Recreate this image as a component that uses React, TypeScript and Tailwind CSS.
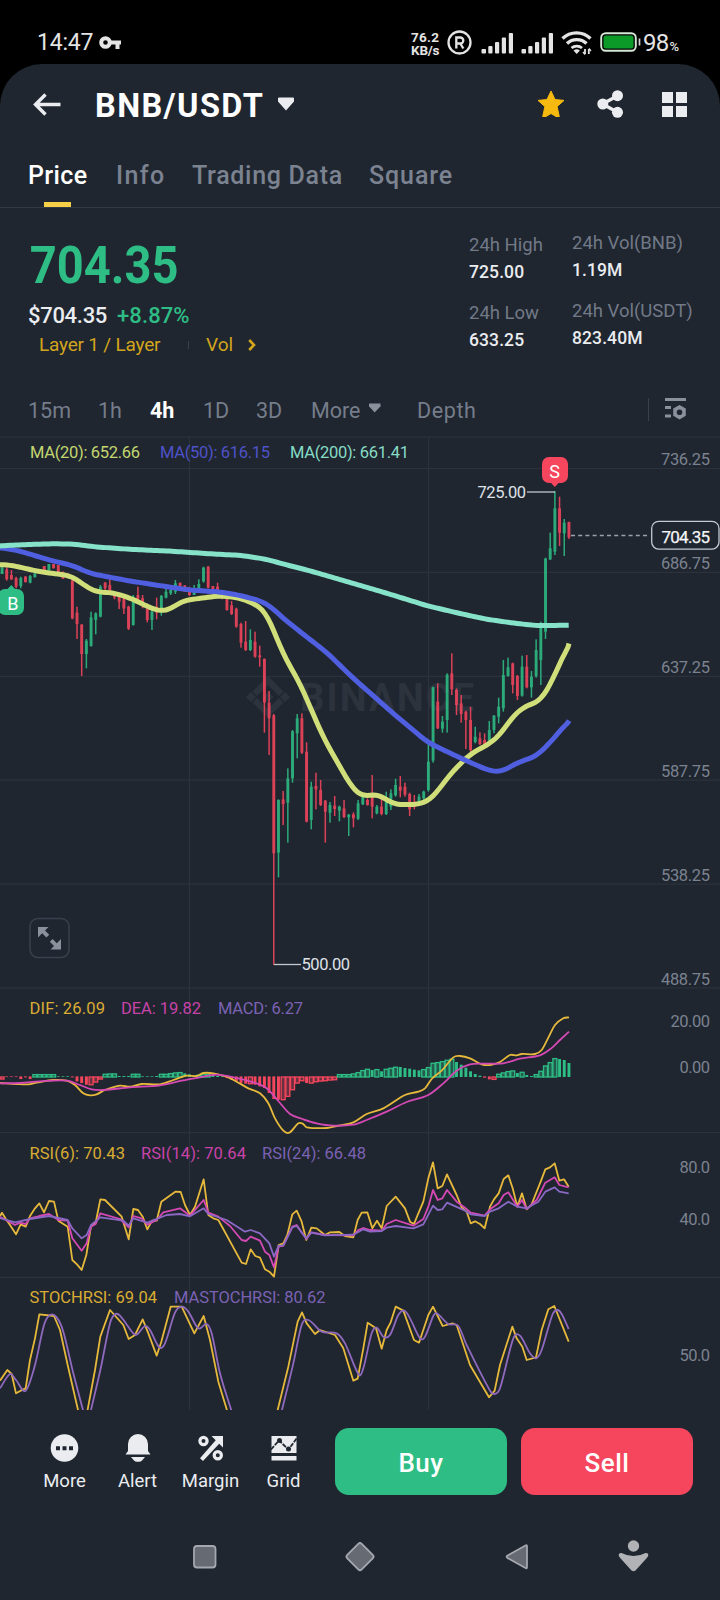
import React from "react";

const UP = "#2ebd85";
const DOWN = "#f6465d";
const STEP = 4.685;
const X0 = 2.05;
const SCALE = 3;

type Pt = [number, number];

/* Candle extents: [direction, high, low, body top?, body bottom?] in thirds of a pixel below `base`. */
type Candle = [0 | 1, number, number, number?, number?];

const candlesA: Candle[] = [
  [1, 322, 342], [0, 322, 362, 328, 358], [0, 330, 360, 345, 358], [0, 350, 385, 354, 380], [1, 350, 385, 354, 378],
  [0, 348, 368, 350, 366], [1, 345, 370, 348, 368], [1, 340, 352], [0, 330, 340], [0, 318, 335], [1, 312, 332],
  [0, 312, 325], [0, 315, 340], [0, 335, 356], [0, 340, 352], [0, 355, 478, 362, 475], [0, 440, 537, 458, 492],
  [0, 492, 648, 494, 582], [1, 537, 625, 542, 582], [1, 455, 560, 472, 558], [1, 457, 523, 460, 480],
  [1, 375, 472, 380, 470], [0, 366, 395, 368, 385], [0, 358, 395, 375, 395], [0, 395, 418, 400, 412],
  [0, 400, 447, 408, 425], [0, 405, 462, 415, 445], [0, 437, 510, 440, 506], [1, 405, 497, 410, 495],
  [0, 380, 420, 405, 418], [0, 405, 445, 415, 435], [0, 430, 487, 445, 480], [1, 440, 510, 455, 480],
  [0, 413, 478, 440, 458], [1, 405, 467, 408, 455], [1, 382, 415, 395, 413], [1, 380, 405, 390, 400],
  [1, 360, 402, 370, 395], [0, 368, 385], [0, 376, 395], [0, 380, 408, 385, 405], [1, 375, 405, 385, 405],
  [1, 358, 395, 372, 392], [1, 320, 368, 323, 364], [0, 318, 385, 320, 383], [0, 378, 400], [0, 368, 392, 380, 392],
  [0, 395, 418, 400, 415], [0, 412, 452, 418, 450], [0, 423, 465, 436, 462], [0, 443, 503, 446, 500],
];
const candlesB: Candle[] = [
  [0, 248, 323, 252, 308], [0, 243, 333, 305, 330], [1, 268, 333, 300, 330], [0, 275, 353, 305, 350],
  [0, 317, 380, 346, 352], [0, 355, 578, 357, 488], [0, 453, 645, 488, 535], [0, 522, 1275, 526, 940],
  [1, 778, 1012, 780, 938], [0, 753, 855, 778, 792], [1, 685, 908, 715, 788], [1, 570, 728, 574, 715],
  [1, 522, 655, 535, 580], [0, 520, 642, 535, 638], [0, 607, 847, 635, 845], [1, 725, 868, 740, 840],
  [0, 698, 808, 738, 748], [0, 720, 798, 750, 795], [0, 780, 908, 782, 815], [1, 786, 848, 795, 818],
  [0, 768, 828, 797, 807], [1, 797, 844, 800, 812], [0, 780, 834, 805, 831], [1, 822, 888, 824, 832],
  [0, 817, 862, 823, 835], [1, 780, 840, 790, 836], [1, 760, 795, 768, 793], [0, 775, 797, 780, 795],
  [0, 705, 835, 760, 800], [1, 795, 823, 800, 820], [0, 765, 826, 800, 822], [1, 755, 825, 775, 822],
  [1, 748, 810, 760, 800], [1, 716, 770, 735, 766], [0, 708, 772, 740, 752], [0, 728, 770, 740, 764],
  [0, 758, 828, 762, 808], [0, 765, 808, 785, 800], [1, 762, 785, 770, 783], [1, 752, 782, 755, 775],
];
const candlesC: Candle[] = [
  [1, 900, 1055, 965, 1050], [1, 740, 968, 742, 962], [0, 730, 867, 785, 865], [1, 828, 878, 845, 866],
  [1, 700, 878, 704, 840], [0, 640, 765, 700, 748], [0, 745, 825, 750, 795], [0, 765, 848, 790, 822],
  [0, 812, 927, 815, 840], [0, 800, 935, 840, 930], [1, 860, 910, 890, 906], [0, 877, 915, 895, 912],
  [0, 880, 915, 900, 915], [1, 843, 915, 870, 905], [1, 825, 880, 827, 870], [1, 773, 850, 800, 830],
  [1, 660, 815, 705, 805], [1, 653, 710, 682, 708], [0, 668, 760, 670, 735], [0, 705, 780, 708, 768],
  [1, 647, 770, 680, 767], [0, 645, 745, 680, 742], [1, 693, 773, 710, 742], [1, 598, 713, 630, 708],
  [1, 545, 735, 560, 660], [1, 353, 597, 356, 575], [1, 278, 360, 325, 358], [1, 153, 345, 205, 335],
  [0, 170, 318, 205, 278], [1, 237, 348, 248, 280], [0, 245, 297, 246, 292],
];

const unpack = (list: Candle[], base: number, first: number) =>
  list.map(([up, h, l, t, b], i) => ({
    x: X0 + STEP * (first + i),
    color: up ? UP : DOWN,
    high: base + h / SCALE,
    low: base + l / SCALE,
    top: base + (t ?? h) / SCALE,
    bottom: base + (b ?? l) / SCALE,
  }));
const candles = [...unpack(candlesA, 460, 0), ...unpack(candlesB, 540, 51), ...unpack(candlesC, 440, 91)];

const macdBars = [
  -8, -2, -2, -2, -8, -3, -8, 9, 9, 9, 9, 9, 2, 2, 2, -3, -15, -20, -25, -25, -17, -8, 10, 11, 11, 3, 3, 3, 10, 10, 2,
  2, 2, 3, 10, 10, 12, 14, 15, 11, 8, 5, 7, 10, 10, 7, 3, 2, -5, -10, -15, -20, -22, -22, -25, -30, -35, -50, -68, -70,
  -70, -60, -40, -20, -13, -20, -20, -16, -14, -13, -11, -10, 9, 9, 9, 11, 15, 21, 25, 21, 24, 17, 25, 28, 31, 30, 27,
  25, 22, 20, 24, 30, 43, 45, 48, 52, 55, 45, 37, 28, 17, 9, 4, -4, -9, -9, 10, 14, 18, 20, 12, 16, 6, 3, 9, 19, 35, 45,
  57, 54, 51, 42,
];

const at = (ox: number, oy: number, pts: Pt[]): Pt[] => pts.map(([x, y]) => [ox + x / SCALE, oy + y / SCALE]);

const f = (n: number) => n.toFixed(2);
const line = (pts: Pt[]) => "M" + pts.map(([x, y]) => `${f(x)} ${f(y)}`).join("L");
const curve = (p: Pt[]) => {
  let d = `M${f(p[0][0])} ${f(p[0][1])}`;
  for (let i = 0; i < p.length - 1; i++) {
    const a = p[i - 1] ?? p[i];
    const b = p[i];
    const c = p[i + 1];
    const e = p[i + 2] ?? c;
    const s = (c[0] - b[0]) / 3;
    const m1 = c[0] === a[0] ? 0 : (c[1] - a[1]) / (c[0] - a[0]);
    const m2 = e[0] === b[0] ? 0 : (e[1] - b[1]) / (e[0] - b[0]);
    d += `C${f(b[0] + s)} ${f(b[1] + m1 * s)} ${f(c[0] - s)} ${f(c[1] - m2 * s)} ${f(c[0])} ${f(c[1])}`;
  }
  return d;
};

/* Resamples at every third pixel and averages neighbours. */
const smooth = (p: Pt[]): Pt[] => {
  const s: Pt[] = [];
  const end = p[p.length - 1][0];
  let j = 0;
  for (let x = p[0][0]; x < end; x += 3) {
    while (p[j + 1][0] < x) j++;
    const t = (x - p[j][0]) / (p[j + 1][0] - p[j][0]);
    s.push([x, p[j][1] + t * (p[j + 1][1] - p[j][1])]);
  }
  s.push(p[p.length - 1]);
  return s.map(([x], i) => {
    const r = Math.min(2, i, s.length - 1 - i);
    const w = s.slice(i - r, i + r + 1);
    return [x, w.reduce((n, q) => n + q[1], 0) / w.length];
  });
};

const ma200: Pt[] = [
  [-2, 546], [20, 544.8], [50, 543.8], [72, 544], [97, 547], [130, 549.3], [173, 551.3], [213, 554], [240, 555.3],
  [265, 559], [287, 565], [307, 570], [345, 581], [387, 593.3], [427, 605.7], [460, 613.5], [487, 619.3], [513, 623],
  [537, 625.7], [568.7, 625.2],
];
const ma50: Pt[] = [
  [-2, 547.5], [17, 550.3], [53, 561], [72, 565.3], [90, 573.3], [107, 576.7], [130, 581], [167, 586.7], [190, 590],
  [220, 592], [240, 595.3], [263, 601.7], [272, 607.7], [283, 618], [300, 631.7], [327, 652.7], [353, 678],
  [397, 716.7], [427, 741.7], [447, 751.7], [467, 761], [490, 771], [502, 771.5], [517, 763], [537, 755.7],
  [550, 742.7], [569, 720.5],
];
const ma20: Pt[] = [
  [-2, 564.7], [10, 565], [40, 571.7], [70, 575.7], [80, 581.7], [88, 588], [97, 592], [113, 592.7], [130, 598],
  [153, 609], [163, 611.5], [172, 608], [183, 600.7], [200, 598.3], [220, 595.8], [240, 598], [257, 605],
  [265, 612], [270, 621], [280, 646.7], [290, 666.7], [300, 683.3], [310, 706.7], [323, 736.7], [337, 761.7],
  [352, 787.5], [362, 796.5], [377, 794], [395, 804.6], [415, 804.6], [428, 801.5], [440, 788.3], [450, 774.3],
  [470, 754.3], [490, 743.3], [500, 735], [510, 720], [522, 707.7], [530, 705], [542, 699], [550, 685], [569, 643.5],
];

const dif = at(0, 980, [
  [0, 309], [50, 312], [85, 313], [110, 308], [160, 300], [200, 302], [225, 315], [250, 340], [270, 346], [290, 343],
  [315, 330], [360, 317], [390, 320], [425, 312], [480, 313], [520, 300], [560, 287], [590, 288], [610, 279],
  [640, 280], [680, 290], [710, 305], [745, 325], [780, 340], [805, 370], [825, 415], [850, 452], [868, 458],
  [895, 430], [908, 431], [920, 442], [980, 444], [1010, 438], [1060, 427], [1100, 402], [1150, 385], [1215, 345],
  [1255, 335], [1275, 325], [1295, 297], [1325, 272], [1360, 232], [1380, 228], [1410, 235], [1445, 253], [1470, 255],
  [1500, 246], [1530, 225], [1550, 226], [1565, 222], [1605, 222], [1625, 210], [1645, 173], [1665, 135], [1690, 115],
  [1707, 112],
]);
const dea = at(0, 980, [
  [0, 310], [60, 309], [120, 304], [200, 302], [240, 315], [275, 328], [310, 330], [390, 322], [480, 316], [545, 302],
  [600, 292], [650, 284], [690, 290], [760, 307], [800, 325], [835, 363], [870, 402], [910, 418], [950, 430],
  [1000, 437], [1060, 434], [1100, 420], [1160, 395], [1220, 366], [1285, 345], [1330, 310], [1370, 272], [1410, 253],
  [1460, 251], [1510, 250], [1560, 236], [1620, 226], [1650, 208], [1680, 180], [1707, 155],
]);
const rsi6 = at(0, 980, [
  [0, 708], [6, 698], [18, 718], [30, 735], [48, 763], [62, 733], [77, 740], [90, 708], [105, 685], [118, 670],
  [132, 697], [147, 663], [162, 665], [175, 722], [203, 740], [217, 840], [231, 853], [245, 870], [259, 825],
  [273, 738], [287, 728], [301, 658], [315, 660], [365, 710], [386, 778], [400, 687], [414, 690], [428, 710],
  [442, 748], [456, 722], [470, 722], [484, 665], [526, 635], [542, 636], [555, 675], [570, 705], [585, 680],
  [611, 598], [625, 705], [640, 715], [655, 720], [725, 848], [738, 852], [752, 808], [766, 828], [780, 833],
  [795, 868], [808, 875], [822, 890], [836, 795], [850, 790], [862, 765], [877, 703], [890, 692], [905, 725],
  [919, 780], [934, 743], [950, 745], [975, 765], [990, 757], [1018, 756], [1035, 768], [1060, 772], [1073, 720],
  [1085, 698], [1102, 697], [1117, 745], [1131, 722], [1145, 745], [1160, 678], [1187, 650], [1215, 685], [1230, 725],
  [1242, 732], [1255, 700], [1270, 665], [1285, 595], [1299, 547], [1313, 625], [1327, 618], [1341, 583], [1370, 645],
  [1385, 682], [1400, 695], [1412, 730], [1425, 724], [1440, 732], [1454, 745], [1470, 680], [1482, 658], [1496, 640],
  [1511, 597], [1525, 586], [1538, 625], [1552, 680], [1566, 640], [1580, 688], [1594, 675], [1622, 605], [1636, 568],
  [1650, 562], [1664, 550], [1678, 602], [1692, 598], [1706, 620],
]);
const rsi14 = at(0, 980, [
  [0, 710], [45, 735], [60, 728], [77, 732], [90, 715], [118, 708], [147, 702], [175, 720], [203, 722], [217, 775],
  [245, 812], [260, 790], [273, 740], [287, 732], [301, 700], [360, 717], [386, 742], [400, 708], [425, 715],
  [442, 734], [470, 720], [490, 697], [540, 685], [570, 707], [611, 660], [625, 698], [655, 710], [690, 738],
  [725, 780], [738, 783], [752, 770], [780, 782], [795, 815], [808, 825], [822, 862], [836, 800], [850, 797],
  [877, 740], [890, 735], [919, 777], [934, 757], [975, 765], [1060, 766], [1075, 750], [1090, 744], [1110, 750],
  [1145, 752], [1160, 732], [1187, 720], [1240, 737], [1270, 717], [1285, 680], [1299, 630], [1313, 660], [1327, 655],
  [1341, 630], [1370, 665], [1395, 683], [1412, 698], [1454, 707], [1470, 688], [1496, 670], [1511, 645], [1525, 637],
  [1552, 680], [1566, 660], [1580, 687], [1610, 660], [1636, 608], [1664, 592], [1678, 615], [1706, 622],
]);
const rsi24 = at(0, 980, [
  [0, 714], [45, 727], [90, 717], [147, 708], [203, 720], [217, 745], [245, 775], [260, 765], [273, 735], [301, 712],
  [370, 722], [386, 737], [400, 715], [442, 728], [500, 705], [540, 702], [570, 709], [611, 685], [625, 702],
  [680, 720], [735, 755], [752, 750], [780, 760], [808, 790], [822, 830], [836, 797], [850, 797], [877, 742],
  [890, 738], [919, 775], [934, 758], [975, 766], [1060, 764], [1090, 748], [1110, 755], [1145, 753], [1160, 743],
  [1187, 738], [1240, 745], [1270, 733], [1299, 677], [1313, 690], [1327, 688], [1341, 668], [1395, 692], [1412, 703],
  [1454, 708], [1470, 695], [1496, 685], [1525, 665], [1552, 680], [1580, 685], [1615, 665], [1636, 635], [1664, 622],
  [1678, 635], [1706, 640],
]);
const stoch = [
  at(0, 1270, [
    [0, 332], [22, 300], [35, 312], [48, 370], [62, 362], [77, 355], [90, 270], [105, 205], [118, 133], [162, 138],
    [180, 180], [203, 285], [235, 424],
  ]),
  at(0, 1270, [
    [262, 424], [285, 300], [301, 200], [330, 120], [370, 165], [386, 207], [405, 195], [428, 148], [445, 190],
    [470, 257], [484, 215], [512, 110], [545, 110], [583, 190], [611, 138], [630, 210], [655, 335], [682, 424],
  ]),
  at(0, 1270, [
    [832, 424], [865, 290], [893, 155], [906, 127], [920, 160], [945, 192], [960, 180], [1005, 195], [1030, 235],
    [1060, 332], [1073, 326], [1090, 235], [1103, 158], [1128, 175], [1145, 236], [1160, 180], [1172, 157],
    [1187, 110], [1210, 122], [1242, 210], [1257, 218], [1285, 135], [1299, 110], [1328, 168], [1357, 160],
    [1370, 165], [1410, 285], [1467, 382], [1484, 362], [1500, 285], [1537, 170], [1550, 205], [1567, 230],
    [1580, 270], [1608, 262], [1625, 180], [1645, 118], [1663, 108], [1706, 215],
  ]),
];
const stochMa = [
  at(0, 1270, [
    [0, 355], [30, 312], [48, 330], [77, 362], [105, 285], [132, 165], [150, 135], [170, 142], [190, 185], [220, 310],
    [250, 424],
  ]),
  at(0, 1270, [
    [272, 424], [301, 300], [330, 160], [345, 133], [360, 137], [400, 190], [412, 193], [435, 168], [450, 180],
    [478, 232], [495, 220], [525, 128], [545, 110], [565, 125], [595, 175], [620, 162], [635, 190], [660, 310],
    [695, 424],
  ]),
  at(0, 1270, [
    [845, 424], [880, 280], [905, 165], [925, 150], [965, 185], [1010, 190], [1035, 220], [1077, 315], [1090, 295],
    [1115, 190], [1130, 173], [1150, 200], [1170, 195], [1195, 135], [1213, 122], [1230, 145], [1260, 205],
    [1275, 200], [1300, 138], [1310, 130], [1345, 162], [1375, 168], [1400, 225], [1470, 362], [1484, 372],
    [1500, 355], [1540, 205], [1560, 197], [1590, 250], [1608, 265], [1625, 240], [1657, 135], [1672, 120],
    [1685, 132], [1706, 177],
  ]),
];

const gridRows = [437, 468.5, 572.3, 676.3, 780.2, 884.2, 987.8, 1132.7, 1277.4];

/* [text, left, width, baseline, colour] */
const legends: [string, number, number, number, string][] = [
  ["MA(20): 652.66", 30, 110, 458, "#c3d66f"],
  ["MA(50): 616.15", 160, 110, 458, "#4f52c8"],
  ["MA(200): 661.41", 290, 119, 458, "#86dcc5"],
  ["DIF: 26.09", 29.5, 75.5, 1014, "#d9ac33"],
  ["DEA: 19.82", 121, 80, 1014, "#c843a8"],
  ["MACD: 6.27", 218, 85, 1014, "#7b62b3"],
  ["RSI(6): 70.43", 29.5, 95.5, 1159, "#d9ac33"],
  ["RSI(14): 70.64", 141, 105, 1159, "#c843a8"],
  ["RSI(24): 66.48", 262, 104, 1159, "#7b62b3"],
  ["STOCHRSI: 69.04", 29.5, 127.5, 1303.2, "#d9ac33"],
  ["MASTOCHRSI: 80.62", 174, 151.5, 1303.2, "#7b62b3"],
];
const axis: [string, number, number][] = [
  ["736.25", 49, 465], ["686.75", 49, 569], ["637.25", 49, 672.8], ["587.75", 49, 776.8], ["538.25", 49, 880.8],
  ["488.75", 49, 984.8], ["20.00", 39.5, 1027], ["0.00", 30.5, 1073], ["80.0", 30.5, 1173], ["40.0", 30.5, 1225],
  ["50.0", 30.5, 1361.3],
];

function Chart() {
  return (
    <svg className="block shrink-0 font-['Roboto',sans-serif]" width="720" height="974" viewBox="0 436 720 974">
      <g fill="#2c333d">
        <path d="M268 676l8 8-4.500 4.500-3.500-3.500-11 11-4.500-4.500zM268 676l15.500 15.500-4.500 4.500-11-11zM268 718l-15.500-15.500 4.500-4.500 11 11 11-11 4.500 4.500zM246 697l5-5 5 5-5 5zM280 697l5-5 5 5-5 5zM268 691.500l5.500 5.500-5.500 5.500-5.500-5.500z" />
        <text x="300" y="711" fontSize="38" fontWeight="700" textLength="174">BINANCE</text>
      </g>
      <g stroke="#2b323c" strokeWidth="1.200">
        {gridRows.map((y) => (
          <line key={y} x1="0" x2="720" y1={y} y2={y} />
        ))}
        <line x1="189.500" x2="189.500" y1="437" y2="1410" />
        <line x1="428.500" x2="428.500" y1="437" y2="1410" />
      </g>

      {candles.map((c, i) => (
        <g key={i} fill={c.color} opacity="0.88">
          <rect x={c.x - 0.75} y={c.high} width="1.500" height={c.low - c.high} />
          <rect x={c.x - 1.45} y={c.top} width="2.900" height={c.bottom - c.top} />
        </g>
      ))}

      <g fill="none" strokeWidth="5">
        <path d={line(smooth(ma20))} stroke="#d0df79" />
        <path d={line(smooth(ma50))} stroke="#4f5fe0" />
        <path d={line(smooth(ma200))} stroke="#87e2ca" />
      </g>

      <g fill="none" stroke="#c3c7ce" strokeWidth="1.300">
        <path d="M274 964.500H301" />
        <path d="M527 492H555" />
        <path d="M571 535.500H648" strokeDasharray="4 3.200" stroke="#9aa0aa" />
      </g>
      <rect x="651.700" y="521.300" width="67.300" height="27.800" rx="7" fill="#1f2630" stroke="#c5c9d0" strokeWidth="1.300" />
      <text x="661.500" y="543.200" fontSize="17" textLength="48.500" fill="#f4f5f7" stroke="#f4f5f7" strokeWidth="0.250">704.35</text>
      <text x="477.500" y="498" fontSize="16.500" textLength="48.500" fill="#dfe2e7">725.00</text>
      <text x="301.500" y="970" fontSize="16.500" textLength="48.500" fill="#dfe2e7">500.00</text>

      <path d="M549 457h12a7 7 0 0 1 7 7v12a7 7 0 0 1-7 7h-2.500l-3.700 4-3.700-4H549a7 7 0 0 1-7-7v-12a7 7 0 0 1 7-7z" fill={DOWN} />
      <text x="554.500" y="478" fontSize="18" textAnchor="middle" fill="#fff">S</text>
      <path d="M5 589h2.500l3.800-4 3.700 4h2a7 7 0 0 1 7 7v12a7 7 0 0 1-7 7H5a7 7 0 0 1-7-7v-12a7 7 0 0 1 7-7z" fill={UP} />
      <text x="12.800" y="609.500" fontSize="18" textAnchor="middle" fill="#fff">B</text>

      <rect x="30" y="918.500" width="39" height="39" rx="8" fill="#1f2630" stroke="#39414c" strokeWidth="1.500" />
      <g fill="#8a919d">
        <path d="M38 927h10.500l-3.500 3.500 4.200 4.200-2.800 2.800-4.200-4.200L38 937.500z" />
        <path d="M61 949.500h-10.500l3.500-3.500-4.200-4.200 2.800-2.800 4.200 4.200L61 939z" />
      </g>

      {macdBars.map((v, i) => {
        const x = X0 + STEP * i;
        const h = Math.abs(v) / SCALE;
        const color = v > 0 ? UP : DOWN;
        const y = v > 0 ? 1077.4 - h - 0.4 : 1076.4;
        const rising = i === 0 || v >= macdBars[i - 1];
        return rising && h > 1.5 ? (
          <rect key={i} x={x - 2} y={y + 0.6} width="4" height={Math.max(h - 0.6, 1)} fill={color} fillOpacity="0.350" stroke={color} strokeWidth="1.300" />
        ) : (
          <rect key={i} x={x - 1.45} y={y} width="2.900" height={h} fill={color} />
        );
      })}

      <g fill="none" strokeWidth="1.800" strokeLinejoin="round">
        <path d={curve(dif)} stroke="#e6b93c" />
        <path d={curve(dea)} stroke="#d549b4" />
        <path d={line(rsi6)} stroke="#e6b93c" />
        <path d={line(rsi14)} stroke="#d549b4" />
        <path d={line(rsi24)} stroke="#8a68c4" />
        {stoch.map((p, i) => (
          <path key={i} d={line(p)} stroke="#e6b93c" />
        ))}
        {stochMa.map((p, i) => (
          <path key={i} d={curve(p)} stroke="#8f69bd" />
        ))}
      </g>

      {legends.map(([t, x, w, y, c]) => (
        <text key={t} x={x} y={y} fontSize="16.500" textLength={w} fill={c}>{t}</text>
      ))}
      {axis.map(([t, w, y]) => (
        <text key={t} x={710 - w} y={y} fontSize="16.500" textLength={w} fill="#7b828f">{t}</text>
      ))}
    </svg>
  );
}

function Signal() {
  return (
    <svg width="33" height="22" viewBox="0 0 33 22" fill="#e4e4e4">
      <rect x="0.500" y="17" width="4.500" height="4.500" rx="1" />
      <rect x="7.300" y="14" width="4.200" height="7.500" rx="1" />
      <rect x="14" y="10" width="4.200" height="11.500" rx="1" />
      <rect x="20.800" y="5.500" width="4.200" height="16" rx="1" />
      <rect x="27.800" y="1" width="4.200" height="20.500" rx="1" />
    </svg>
  );
}

function StatusBar() {
  return (
    <div className="flex h-[64px] shrink-0 items-center bg-black pt-[21px] pl-[37px] text-[#e4e4e4]">
      <span className="w-[62px] text-[23px] leading-none tracking-[-0.200px]">14:47</span>
      <svg width="23" height="14" viewBox="0 0 23 14" fill="none" stroke="#e4e4e4">
        <circle cx="6.500" cy="6.500" r="4.300" strokeWidth="4" />
        <path d="M10 6.500h12M18.500 7v6" strokeWidth="4" />
      </svg>
      <div className="ml-[289px] flex w-[36px] flex-col pt-[2px] text-[13.500px] leading-[13px] font-bold">
        <span className="tracking-[0.300px]">76.2</span>
        <span className="tracking-[-0.200px]">KB/s</span>
      </div>
      <svg className="mr-[9px]" width="25" height="25" viewBox="0 0 25 25" fill="none" stroke="#e4e4e4">
        <circle cx="12.500" cy="12.500" r="11" strokeWidth="2.300" />
        <path d="M9.300 18.500v-11h4a2.800 2.800 0 0 1 0 6h-4m4 0l3 5" strokeWidth="2.300" />
      </svg>
      <Signal />
      <div className="w-[7px]" />
      <Signal />
      <svg className="ml-[7px]" width="32" height="24" viewBox="0 0 32 24" fill="none" stroke="#e4e4e4">
        <path d="M1.500 7.500a20 20 0 0 1 28 0M6 12.500a14 14 0 0 1 19.500 0" strokeWidth="3.300" />
        <path d="M10.500 17a8 8 0 0 1 10.500 0" strokeWidth="2.800" />
        <path d="M12.500 19.500a5 5 0 0 1 6.400 0L15.700 23z" fill="#e4e4e4" stroke="none" />
        <path d="M24 18v5M27.800 18v5" strokeWidth="1.800" />
        <path d="M22 21l2 2.500M30 20l-2-2.500" strokeWidth="1.300" />
      </svg>
      <svg className="ml-[7px]" width="41" height="21" viewBox="0 0 41 21">
        <rect x="1.200" y="1.200" width="34.600" height="17.600" rx="4.500" fill="none" stroke="#d5e6d5" strokeWidth="1.900" />
        <rect x="3.500" y="3.500" width="30" height="13" rx="2.500" fill="#0b9a28" />
        <path d="M39.500 6.500v7" stroke="#d0d0d0" strokeWidth="1.700" />
      </svg>
      <span className="ml-[2px] text-[24px] leading-none tracking-[-0.800px]">98</span>
      <span className="mt-[7px] ml-px text-[13px] leading-none font-medium">%</span>
    </div>
  );
}

function Header() {
  return (
    <div className="flex h-[80px] shrink-0 items-center pl-[32px]">
      <svg className="w-[62px]" width="62" height="24" viewBox="0 0 62 24" fill="none" stroke="#eaecef" strokeWidth="3.400">
        <path d="M28.500 12.500H3.500M13.500 2.500L3.500 12.500l10 10" />
      </svg>
      <span className="w-[183px] pt-[5px] pl-px text-[32.500px] leading-none font-bold tracking-[1.400px] text-white">BNB/USDT</span>
      <svg width="18" height="14" viewBox="0 0 18 14" fill="#eaecef">
        <path d="M2 0.500h14a1 1 0 0 1 1 1v3L9 13.500 1 4.500v-3a1 1 0 0 1 1-1z" />
      </svg>
      <svg className="ml-[241px]" width="30" height="30" viewBox="0 0 30 30">
        <path d="M15 2l4 8.500 9 .9-6.900 6.200 2.200 9.900H20L15 24.500l-5 3H6.700l2.200-9.900L2 11.400l9-.9z" fill="#f6b90f" stroke="#f6b90f" strokeLinejoin="round" />
      </svg>
      <svg className="ml-[31px]" width="27" height="28" viewBox="0 0 27 28" fill="#eaecef">
        <path d="M5.500 14L21 5.500M5.500 14L21 22.500" stroke="#eaecef" strokeWidth="3.300" />
        <circle cx="5.800" cy="14" r="5.500" />
        <circle cx="20.500" cy="5.700" r="5.500" />
        <circle cx="20.500" cy="22.300" r="5.500" />
      </svg>
      <svg className="ml-[38px]" width="25" height="25" viewBox="0 0 25 25" fill="#eaecef">
        <path d="M0 0h11v11H0zM14 0h11v11H14zM0 14h11v11H0zM14 14h11v11H14z" />
      </svg>
    </div>
  );
}

function Tabs() {
  return (
    <div className="flex h-[64px] shrink-0 border-b border-[#333a45] pl-[28px] text-[25px] leading-[63px] text-[#7b8290]">
      <div className="relative w-[87px] font-medium text-white">
        <span className="tracking-[0.4px]">Price</span>
        <div className="absolute top-[58px] left-[16px] h-[5px] w-[27px] bg-[#f8d048]" />
      </div>
      <span className="w-[76px] pl-px font-medium tracking-[1.400px]">Info</span>
      <span className="w-[177px] pl-px font-medium tracking-[0.700px]">Trading Data</span>
      <span className="pl-px font-medium tracking-[0.900px]">Square</span>
    </div>
  );
}

function Stat({ label, value }: { label: string; value: string }) {
  return (
    <div className="h-[68px] whitespace-nowrap">
      <div className="text-[18.500px] leading-[27px] text-[#727987]">{label}</div>
      <div className="text-[17.500px] leading-[27px] font-medium tracking-[0.100px] text-[#eaecef]">{value}</div>
    </div>
  );
}

function Summary() {
  return (
    <div className="flex h-[167px] shrink-0 pl-[28px]">
      <div className="w-[441px] pt-[32px]">
        <div className="w-fit origin-left scale-x-[0.905] pl-[2px] text-[52px] leading-[52px] font-bold text-[#2ebd85]">704.35</div>
        <div className="mt-[10px] flex text-[22px] leading-[28px] font-medium">
          <span className="w-[89px] tracking-[-0.300px] text-[#eaecef]">$704.35</span>
          <span className="tracking-[0.100px] text-[#2ebd85]">+8.87%</span>
        </div>
        <div className="flex items-center pl-[11px] text-[19px] leading-[29px] text-[#d3a51c]">
          <span className="w-[149px] tracking-[-0.200px]">Layer 1 / Layer</span>
          <span className="mr-[17px] h-[8px] w-px bg-[#3a414c]" />
          <span className="w-[42px]">Vol</span>
          <svg width="8" height="12" viewBox="0 0 8 12" fill="none" stroke="#d3a51c" strokeWidth="2.600">
            <path d="M1.200 1l4.800 5-4.800 5" />
          </svg>
        </div>
      </div>
      <div className="w-[103px] pt-[24px]">
        <Stat label="24h High" value="725.00" />
        <Stat label="24h Low" value="633.25" />
      </div>
      <div className="pt-[22px]">
        <Stat label="24h Vol(BNB)" value="1.19M" />
        <Stat label="24h Vol(USDT)" value="823.40M" />
      </div>
    </div>
  );
}

function Intervals() {
  return (
    <div className="flex h-[61px] shrink-0 items-center pt-[7px] pl-[28px] text-[21.500px] text-[#767d8a]">
      <span className="w-[70px] pt-[4px]">15m</span>
      <span className="w-[52px] pt-[4px]">1h</span>
      <span className="w-[53px] pt-[4px] font-bold text-white">4h</span>
      <span className="w-[53px] pt-[4px]">1D</span>
      <span className="w-[55px] pt-[4px]">3D</span>
      <span className="w-[57px] pt-[4px]">More</span>
      <svg className="mb-[2px]" width="13" height="10" viewBox="0 0 13 10" fill="#8a909c">
        <path d="M1 0.500h11.500v2.800L6.700 9.500 1 3.300z" />
      </svg>
      <span className="ml-[36px] w-[231px] pt-[4px] tracking-[0.600px]">Depth</span>
      <span className="h-[23px] w-px bg-[#3a414c]" />
      <svg className="ml-[16px]" width="22" height="22" viewBox="0 0 22 22" fill="#8a909c">
        <path d="M0 0h21v3H0zM0 8h6v3H0zM0 16.500h6v3H0z" />
        <path fillRule="evenodd" d="M14.500 7l6.300 3.600v7.200l-6.300 3.600-6.300-3.600v-7.200zM14.500 11.400a2.800 2.800 0 1 0 0 5.600 2.800 2.800 0 0 0 0-5.600z" />
      </svg>
    </div>
  );
}

function Action({ label, children }: { label: string; children: React.ReactNode }) {
  return (
    <div className="flex w-[73px] flex-col items-center">
      <svg width="30" height="30" viewBox="0 0 30 30" fill="#eaecef">{children}</svg>
      <span className="mt-[4px] text-[18.500px] leading-[28px] text-[#eaecef]">{label}</span>
    </div>
  );
}

function BottomBar() {
  return (
    <div className="flex h-[100px] shrink-0 pt-[18px] pl-[28px]">
      <div className="flex w-[307px] pt-[5px]">
        <Action label="More">
          <circle cx="14.500" cy="15" r="13.800" />
          <path d="M6 13.200h4v4H6zM12.500 13.200h4v4h-4zM19 13.200h4v4h-4z" fill="#1f2630" />
        </Action>
        <Action label="Alert">
          <path d="M15 1a10 10 0 0 1 10 10v7l2.500 3.500h-25L5 18v-7A10 10 0 0 1 15 1zM8 24h14l-3 3.500a4 4 0 0 1-3 1.300h-2a4 4 0 0 1-3-1.300z" />
        </Action>
        <Action label="Margin">
          <circle cx="7.500" cy="8" r="3.600" fill="none" stroke="#eaecef" strokeWidth="3.200" />
          <circle cx="21.800" cy="22.200" r="3.600" fill="none" stroke="#eaecef" strokeWidth="3.200" />
          <path d="M15.500 3H27v11.500l-3.800-3.800L7 28l-3-2.800L19.700 7.200z" />
        </Action>
        <Action label="Grid">
          <path d="M2.500 3h25v17h-25z" />
          <path d="M2.500 23h25v4.500h-25z" />
          <path d="M2 16.500L10 7.500l9.500 9L28 5" fill="none" stroke="#1f2630" strokeWidth="1.800" strokeDasharray="4.500 1.200" />
          <circle cx="10.500" cy="7.500" r="2.500" fill="#1f2630" />
          <circle cx="19.500" cy="16" r="2.500" fill="#1f2630" />
        </Action>
      </div>
      <button className="h-[67px] w-[172px] rounded-[14px] bg-[#2ebd85] pt-[4px] text-[26px] font-medium tracking-[0.500px] text-white">Buy</button>
      <button className="ml-[14px] h-[67px] w-[172px] rounded-[14px] bg-[#f6465d] pt-[4px] text-[26px] font-medium tracking-[0.500px] text-white">Sell</button>
    </div>
  );
}

function NavBar() {
  return (
    <div className="flex h-[90px] items-center pt-[2px] pl-[189px]">
      <svg width="30" height="32" viewBox="0 0 30 32" fill="#666a72" stroke="#a4a7ad" strokeWidth="1.800">
        <rect x="5" y="6" width="21.500" height="21.500" rx="3" />
      </svg>
      <svg className="ml-[125px]" width="32" height="32" viewBox="0 0 32 32" fill="#666a72" stroke="#a4a7ad" strokeWidth="1.800">
        <rect x="5.800" y="6.300" width="20.500" height="20.500" rx="2.500" transform="rotate(45 16 16.500)" />
      </svg>
      <svg className="ml-[127px]" width="28" height="32" viewBox="0 0 28 32" fill="#666a72" stroke="#a4a7ad" strokeWidth="1.800" strokeLinejoin="round">
        <path d="M22.500 5.500q1.500-.8 1.500 1v20.500q0 1.800-1.500 1l-18-10q-1.800-1.200 0-2.400z" />
      </svg>
      <svg className="ml-[86px]" width="32" height="36" viewBox="0 0 32 36" fill="#b0b2b6">
        <circle cx="16.500" cy="8" r="5.700" />
        <path d="M4.500 15q5.500 3 12 3t12-3q2.500-.4 2.800 1.500.3 1.800-1.500 3.500L18.500 32.500q-2 1.600-4 0L3.200 20q-1.800-1.700-1.500-3.500.3-1.900 2.800-1.500z" />
      </svg>
    </div>
  );
}

export default function App() {
  return (
    <div className="flex h-[1600px] w-[720px] flex-col overflow-hidden bg-black font-['Roboto',sans-serif]">
      <StatusBar />
      <div className="flex flex-1 flex-col overflow-hidden rounded-t-[42px] bg-[#1f2630]">
        <Header />
        <Tabs />
        <Summary />
        <Intervals />
        <Chart />
        <BottomBar />
        <NavBar />
      </div>
    </div>
  );
}
